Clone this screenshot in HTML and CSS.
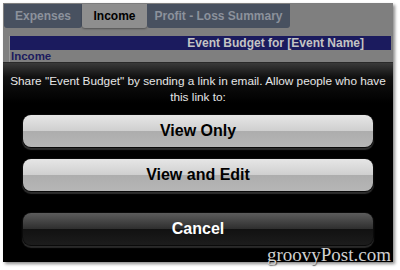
FILE: index.html
```html
<html>
<head>
  <link rel="stylesheet" href="styles.css">
</head>
<body>
<div class="shot">
  <div class="sheet">
    <div class="tabs">
      <div class="tab tab-dark tab-expenses">Expenses</div>
      <div class="tab tab-active tab-income">Income</div>
      <div class="tab tab-dark tab-profit">Profit - Loss Summary</div>
    </div>
    <div class="grid">
      <div class="grid-title">Event Budget for [Event Name]</div>
      <div class="grid-label">Income</div>
    </div>
  </div>
  <div class="share">
    <p class="share-text">Share "Event Budget" by sending a link in email. Allow people who have<br>this link to:</p>
    <a href="#" class="share-button">View Only</a>
    <a href="#" class="share-button">View and Edit</a>
    <a href="#" class="share-button cancel-button">Cancel</a>
  </div>
  <div class="watermark">groovyPost.com</div>
</div>
</body>
</html>
```

FILE: styles.css
```css
body {
  margin: 0;
  padding: 0;
  background: #fff;
  font-family: "Liberation Sans", Arial, sans-serif;
}

.shot {
  position: relative;
  margin: 3px 0 0 3px;
  width: 390px;
  height: 259px;
  box-shadow: 2px 2px 3px rgba(0,0,0,0.45);
}

.sheet {
  height: 59px;
  background: #7f7f7f;
  overflow: hidden;
}

.tabs {
  display: flex;
  padding: 1px 0 0 1px;
  height: 24px;
}

.tab {
  height: 24px;
  line-height: 24px;
  text-align: center;
  font-size: 12px;
  font-weight: bold;
  border-radius: 0 0 3px 3px;
}

.tab-dark {
  background: #485160;
  color: #8c929c;
}

.tab-active {
  background: #8e8e8e;
  color: #000;
  box-shadow: 0 1px 2px rgba(0,0,0,0.35);
}

.tab-expenses {
  width: 78px;
}

.tab-income {
  width: 65px;
}

.tab-profit {
  width: 143px;
}

.grid {
  margin: 8px 0 0 6px;
  width: 381px;
  border-left: 1px solid #9a9a9a;
}

.grid-title {
  height: 14px;
  line-height: 14px;
  background: #1b1b5e;
  color: #c4c4c4;
  font-size: 12px;
  font-weight: bold;
  text-align: right;
  padding-right: 27px;
}

.grid-label {
  height: 12px;
  line-height: 12px;
  color: #1b1b5e;
  font-size: 11.5px;
  font-weight: bold;
  padding-left: 1px;
}

.share {
  height: 200px;
  background: linear-gradient(#3a3a3a, #111 14px, #000 40px);
  border-top: 1px solid #2a2a2a;
  box-sizing: border-box;
  display: flex;
  flex-direction: column;
  align-items: center;
  padding-top: 10px;
}

.share-text {
  margin: 0 0 10px 0;
  color: #e6e6e6;
  font-size: 11.8px;
  line-height: 16px;
  text-align: center;
  white-space: nowrap;
}

.share-button {
  display: block;
  width: 350px;
  height: 32px;
  line-height: 32px;
  margin-bottom: 12px;
  border-radius: 8px;
  text-align: center;
  text-decoration: none;
  font-size: 16px;
  font-weight: bold;
  color: #000;
  background: linear-gradient(#e6e6e6, #cfcfcf 50%, #adadad 50%, #b6b6b6);
  box-shadow: 0 0 0 1px #0a0a0a, 0 2px 1px 1px #2e2e2e;
}

.cancel-button {
  margin-top: 10px;
  color: #fff;
  background: linear-gradient(#5c5c5c, #2e2e2e 50%, #111 50%, #1c1c1c);
  box-shadow: 0 0 0 1px #0a0a0a, 0 2px 1px 1px #2a2a2a;
}

.watermark {
  position: absolute;
  right: 2px;
  bottom: -4px;
  font-family: "Liberation Serif", "Times New Roman", serif;
  font-size: 19px;
  color: #cfcfcf;
  text-shadow: 1px 1px 1px rgba(0,0,0,0.6);
}
```
